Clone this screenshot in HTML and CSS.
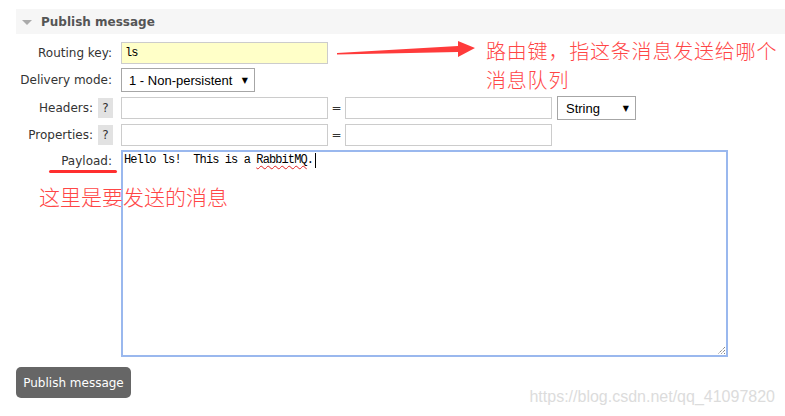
FILE: index.html
```html
<!DOCTYPE html>
<html lang="zh-CN">
<head>
<meta charset="utf-8">
<title>Publish message</title>
<link rel="stylesheet" href="styles.css">
</head>
<body>
<div class="page">
  <div class="section">
    <div class="section-head"><span class="tri"></span><h2>Publish message</h2></div>
    <form class="form">
      <label class="lbl">Routing key:</label>
      <div class="field"><input class="text key" type="text" value="ls"></div>

      <label class="lbl">Delivery mode:</label>
      <div class="field"><span class="select w-mode"><span>1 - Non-persistent</span><span class="caret">▼</span></span></div>

      <label class="lbl">Headers: <span class="help">?</span></label>
      <div class="field"><input class="text" type="text"><span class="eq">=</span><input class="text" type="text"><span class="select w-type"><span>String</span><span class="caret">▼</span></span></div>

      <label class="lbl">Properties: <span class="help">?</span></label>
      <div class="field"><input class="text" type="text"><span class="eq">=</span><input class="text" type="text"></div>

      <label class="lbl top">Payload:</label>
      <div class="field">
        <div class="payload">Hello ls!  This is a <span class="spell">RabbitMQ</span>.<span class="cursor"></span>
          <svg class="grip" width="10" height="10" viewBox="0 0 10 10"><path d="M9 2 L2 9 M9 5 L5 9 M9 8 L8 9" stroke="#555" stroke-width="1" stroke-dasharray="1 1" fill="none"/></svg>
        </div>
      </div>
    </form>
    <button class="btn" type="button">Publish message</button>
  </div>

  <svg class="arrow" width="141" height="20" viewBox="0 0 141 20"><polygon points="1,14 122,7 122,2 139,9 122,18 122,13 1,15.5" fill="#ff3b3b"/></svg>
  <div class="note note-key"><div class="note-line">路由键，指这条消息发送给哪个</div><div class="note-line">消息队列</div></div>
  <div class="mark-line"></div>
  <div class="note note-payload">这里是要发送的消息</div>
  <div class="watermark">https://blog.csdn.net/qq_41097820</div>
</div>
</body>
</html>
```

FILE: styles.css
```css
html, body {
  margin: 0;
  padding: 0;
  background: #fff;
}
body {
  font-family: "DejaVu Sans", Verdana, sans-serif;
  font-size: 12px;
  color: #333;
}
.page {
  position: relative;
  width: 785px;
  height: 416px;
  overflow: hidden;
}
.section {
  padding: 9px 0 0 16px;
}
.section-head {
  display: flex;
  align-items: center;
  height: 25px;
  background: #f6f6f6;
  padding-left: 6px;
}
.tri {
  width: 0;
  height: 0;
  border-left: 5px solid transparent;
  border-right: 5px solid transparent;
  border-top: 5px solid #aaa;
  margin-top: 1px;
}
.section-head h2 {
  margin: 0 0 0 9px;
  font-size: 12px;
  font-weight: bold;
  color: #555;
}
.form {
  display: grid;
  grid-template-columns: 97px auto;
  column-gap: 8px;
  row-gap: 4px;
  margin-top: 8px;
  align-items: center;
}
.lbl {
  display: flex;
  justify-content: flex-end;
  align-items: center;
  padding-right: 1px;
  color: #333;
  white-space: nowrap;
}
.lbl.top {
  align-self: start;
  padding-top: 4px;
}
.help {
  display: inline-flex;
  align-items: center;
  justify-content: center;
  width: 15px;
  height: 20px;
  margin-left: 5px;
  margin-right: -1px;
  background: #e2e2e2;
  color: #333;
}
.field {
  display: flex;
  align-items: center;
}
.text {
  box-sizing: border-box;
  width: 207px;
  height: 22px;
  margin: 0;
  padding: 1px 3px;
  border: 1px solid #ccc;
  background: #fff;
  font-family: "Liberation Mono", monospace;
  font-size: 12px;
  letter-spacing: -0.9px;
  color: #000;
  outline: none;
}
.text.key {
  background: #ffffc8;
}
.eq {
  width: 17px;
  text-align: center;
  color: #333;
}
.select {
  box-sizing: border-box;
  display: inline-flex;
  align-items: center;
  justify-content: space-between;
  height: 24px;
  padding: 0 6px 0 7px;
  border: 1px solid #a6a6a6;
  background: #fff;
  font-family: "Liberation Sans", Arial, sans-serif;
  font-size: 13px;
  color: #000;
}
.w-mode { width: 134px; }
.w-type { width: 79px; margin-left: 5px; padding-left: 8px; }
.caret {
  font-family: "DejaVu Sans", sans-serif;
  font-size: 8px;
  color: #000;
}
.payload {
  position: relative;
  box-sizing: border-box;
  width: 607px;
  height: 207px;
  border: 2px solid #9ab8ee;
  padding: 1px 1px;
  background: #fff;
  font-family: "Liberation Mono", monospace;
  font-size: 12px;
  line-height: 15px;
  letter-spacing: -0.9px;
  white-space: pre;
  color: #000;
}
.spell {
  text-decoration: underline wavy #e02020;
  text-decoration-thickness: 1px;
  text-underline-offset: 2px;
}
.cursor {
  display: inline-block;
  width: 1px;
  height: 15px;
  margin-left: 2px;
  background: #000;
  vertical-align: top;
}
.grip {
  position: absolute;
  right: 0;
  bottom: 0;
}
.btn {
  display: block;
  margin-top: 10px;
  width: 115px;
  height: 31px;
  padding: 0;
  border: none;
  border-radius: 5px;
  background: #666;
  color: #fff;
  font-family: "DejaVu Sans", Verdana, sans-serif;
  font-size: 12px;
}
.arrow {
  position: absolute;
  left: 336px;
  top: 39px;
}
.note {
  position: absolute;
  font-family: "Noto Sans CJK SC", sans-serif;
  font-weight: 300;
  font-size: 21px;
  line-height: 26px;
  color: #ff4646;
  white-space: nowrap;
}
.note-line {
  height: 29px;
  line-height: 29px;
  font-size: 20px;
  letter-spacing: 0.8px;
}
.note-key {
  left: 486px;
  top: 36px;
}
.note-payload {
  left: 39px;
  top: 183px;
}
.mark-line {
  position: absolute;
  left: 49px;
  top: 170px;
  width: 68px;
  height: 3px;
  border-radius: 2px;
  background: #ff2f2f;
}
.watermark {
  position: absolute;
  right: 10px;
  top: 388px;
  font-family: "Liberation Sans", Arial, sans-serif;
  font-size: 16px;
  line-height: 18px;
  color: #dcdcdc;
}
```
